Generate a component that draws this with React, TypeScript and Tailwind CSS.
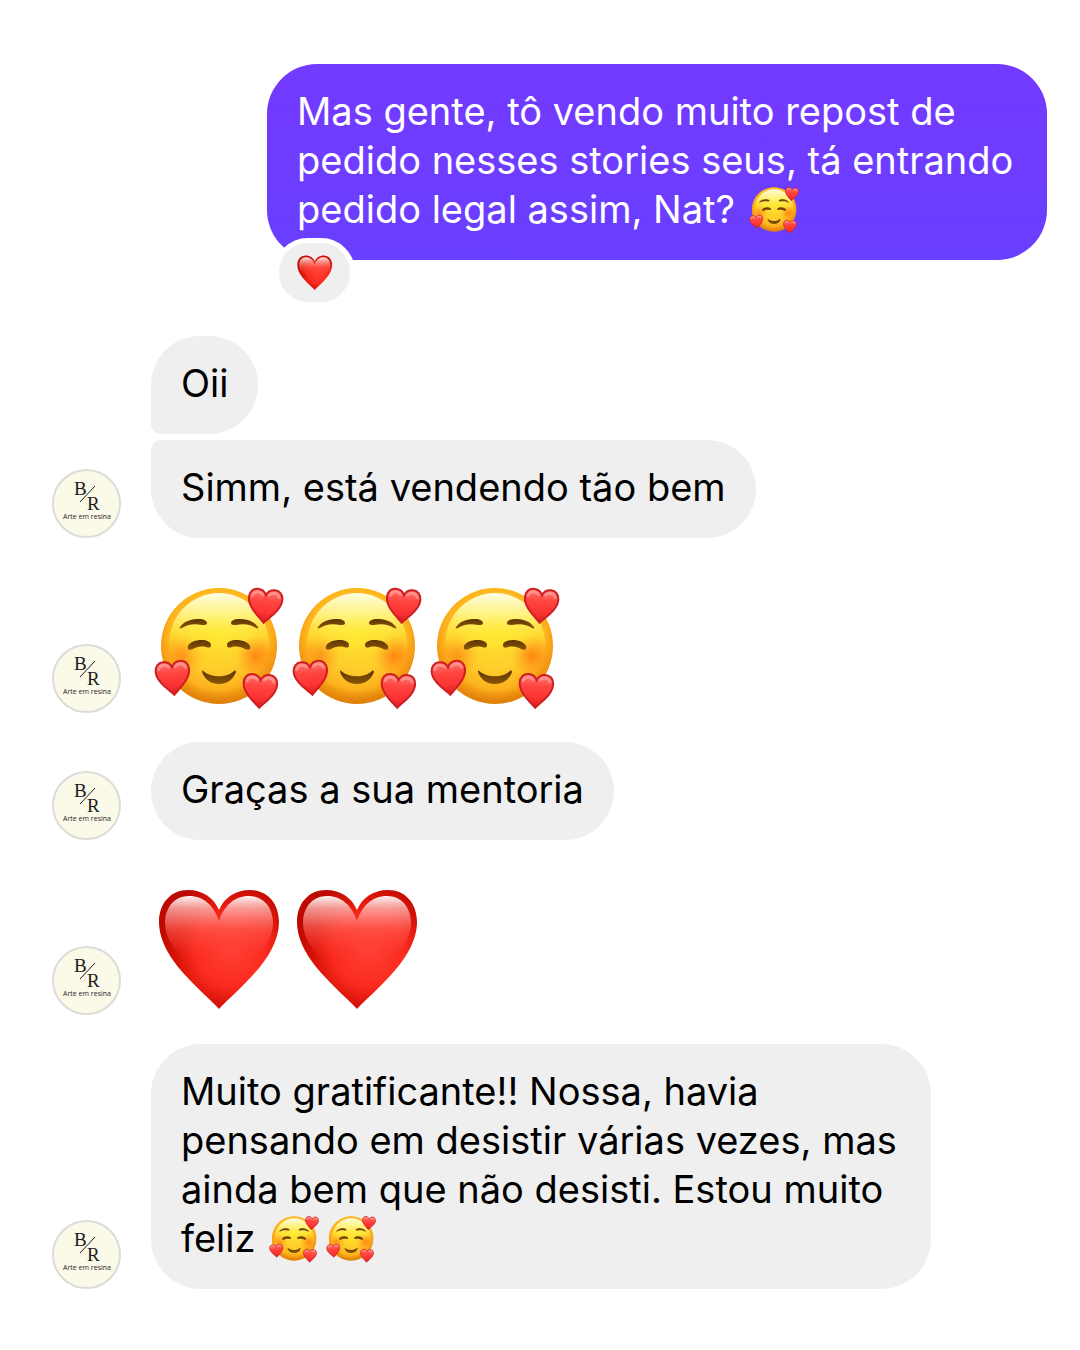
import { useId } from "react";
import type { ReactNode } from "react";
import clsx from "clsx";

const HEART =
  "M68 128C62 121 50 111 35 95C20 79 8 60 8 41C8 22 20 9 37 9C52 9 63 17 68 29C73 17 84 9 99 9C116 9 128 22 128 41C128 60 116 79 101 95C86 111 74 121 68 128Z";
const HEART_SHINE =
  "M68 118C62 111 54 102 41 88C26 72 14 58 14 42C14 26 24 15 38 15C53 15 63 25 68 40C73 25 83 15 98 15C112 15 122 26 122 42C122 58 110 72 95 88C82 102 74 111 68 118Z";

function RedHeart({ className }: { className?: string }) {
  const id = useId();
  return (
    <svg viewBox="0 0 138 138" className={className} role="img" aria-label="❤️">
      <defs>
        <radialGradient
          id={`${id}base`}
          gradientUnits="userSpaceOnUse"
          cx="80"
          cy="70"
          r="72"
        >
          <stop offset="0" stopColor="#ff4034" />
          <stop offset="0.5" stopColor="#fb2a1e" />
          <stop offset="0.75" stopColor="#d91409" />
          <stop offset="1" stopColor="#bd0a02" />
        </radialGradient>
        <linearGradient id={`${id}shine`} x1="0" y1="0" x2="0" y2="1">
          <stop offset="0" stopColor="#fff" stopOpacity="0.95" />
          <stop offset="0.12" stopColor="#ffc4c0" stopOpacity="0.75" />
          <stop offset="0.32" stopColor="#ff5f55" stopOpacity="0.65" />
          <stop offset="0.62" stopColor="#ff3b30" stopOpacity="0" />
        </linearGradient>
      </defs>
      <path d={HEART} fill={`url(#${id}base)`} />
      <path d={HEART_SHINE} fill={`url(#${id}shine)`} />
    </svg>
  );
}

function LoveFace({ className }: { className?: string }) {
  const id = useId();
  const hearts = [
    "translate(114 29) rotate(5) scale(0.28) translate(-68 -68)",
    "translate(22 101) rotate(-5) scale(0.28) translate(-68 -68)",
    "translate(109 114) rotate(3) scale(0.28) translate(-68 -68)",
  ];
  return (
    <svg viewBox="0 0 138 138" className={className} role="img" aria-label="🥰">
      <defs>
        <linearGradient id={`${id}rim`} x1="0" y1="0" x2="0" y2="1">
          <stop offset="0" stopColor="#fcb80f" />
          <stop offset="0.5" stopColor="#f79a14" />
          <stop offset="1" stopColor="#e0820a" />
        </linearGradient>
        <radialGradient id={`${id}face`} cx="0.5" cy="0.43" r="0.55">
          <stop offset="0" stopColor="#ffe22a" />
          <stop offset="0.5" stopColor="#ffcd2c" />
          <stop offset="0.82" stopColor="#fdb21e" />
          <stop offset="1" stopColor="#f79c14" stopOpacity="0" />
        </radialGradient>
        <linearGradient id={`${id}gloss`} x1="0" y1="0" x2="0" y2="1">
          <stop offset="0" stopColor="#fffde4" />
          <stop offset="0.22" stopColor="#fff98c" stopOpacity="0.85" />
          <stop offset="0.4" stopColor="#fff23c" stopOpacity="0.55" />
          <stop offset="0.6" stopColor="#ffe93a" stopOpacity="0" />
        </linearGradient>
        <radialGradient id={`${id}blush`}>
          <stop offset="0" stopColor="#ff7a10" stopOpacity="0.8" />
          <stop offset="1" stopColor="#ff8c14" stopOpacity="0" />
        </radialGradient>
        <linearGradient id={`${id}heart`} x1="0" y1="0" x2="0" y2="1">
          <stop offset="0" stopColor="#ff7a75" />
          <stop offset="0.35" stopColor="#ff4540" />
          <stop offset="0.7" stopColor="#fb3433" />
          <stop offset="1" stopColor="#d81a20" />
        </linearGradient>
        <linearGradient id={`${id}line`} x1="0" y1="0" x2="0" y2="1">
          <stop offset="0" stopColor="#5e3403" />
          <stop offset="1" stopColor="#8a5706" />
        </linearGradient>
      </defs>
      <circle cx="68" cy="69" r="58" fill={`url(#${id}rim)`} />
      <circle cx="68" cy="69" r="57" fill={`url(#${id}face)`} />
      <ellipse cx="68" cy="67" rx="50" ry="51" fill={`url(#${id}gloss)`} />
      <circle
        cx="31"
        cy="79"
        r="20"
        fill={`url(#${id}blush)`}
        opacity="0.75"
      />
      <circle cx="105" cy="79" r="20" fill={`url(#${id}blush)`} />
      <g fill={`url(#${id}line)`}>
        <path d="M29 50C34 43 42 42 48 42C53 42 56 44 56 46C56 48 54 48 51 48C42 46 36 48 31 51C29 52 28 51 29 50Z" />
        <path d="M107 50C102 43 94 42 88 42C83 42 80 44 80 46C80 48 82 48 85 48C94 46 100 48 105 51C107 52 108 51 107 50Z" />
        <path d="M37 69C39 65 45 63 50 63C56 63 60 65 60 68C60 71 58 71 55 70C50 69 45 70 42 72C38 74 36 72 37 69Z" />
        <path d="M99 69C97 65 91 63 86 63C80 63 76 65 76 68C76 71 78 71 81 70C86 69 91 70 94 72C98 74 100 72 99 69Z" />
        <path d="M52 94C60 101 76 101 83 94C84 93 85 94 85 95C82 103 76 107 68 107C60 107 54 103 51 95C51 94 51 93 52 94Z" />
      </g>
      {hearts.map((transform) => (
        <g key={transform} transform={transform}>
          <path
            d={HEART}
            fill={`url(#${id}heart)`}
            stroke="#cf1e20"
            strokeWidth="7"
          />
          <path
            d="M20 34C22 26 30 20 39 20C46 20 52 23 56 28M80 28C84 23 90 20 98 20C106 20 113 26 116 34"
            fill="none"
            stroke="#ffb5b0"
            strokeWidth="10"
            strokeLinecap="round"
            opacity="0.55"
          />
        </g>
      ))}
    </svg>
  );
}

function InlineFace() {
  return (
    <LoveFace className="inline-block align-middle size-[53px] -mt-[11px] -mb-[5px] mx-[2px]" />
  );
}

function Avatar() {
  return (
    <div className="size-[69px] shrink-0 rounded-full border-2 border-[#dcdcd8] bg-[#fbf9e8] overflow-hidden">
      <svg
        viewBox="2 2 65 65"
        className="size-full"
        role="img"
        aria-label="B/R Arte em resina"
      >
        <g fill="#1c1c1c" fontFamily="'Liberation Serif', serif" fontSize="19">
          <text x="22" y="26">
            B
          </text>
          <text x="35" y="41">
            R
          </text>
        </g>
        <path d="M28 33L43 17" stroke="#1c1c1c" strokeWidth="1" />
        <text
          x="35"
          y="50"
          textAnchor="middle"
          fontFamily="'Open Sans', sans-serif"
          fontSize="7"
          fill="#1c1c1c"
        >
          Arte em resina
        </text>
      </svg>
    </div>
  );
}

interface BubbleProps {
  children: ReactNode;
  className?: string;
}

function Bubble({ children, className }: BubbleProps) {
  return (
    <div
      className={clsx(
        "max-w-[780px] px-[30px] pt-[23px] pb-[26px] text-[38px] leading-[49px]",
        className
      )}
    >
      {children}
    </div>
  );
}

function Received({ children }: { children: ReactNode }) {
  return (
    <div className="flex items-end gap-[30px]">
      <Avatar />
      {children}
    </div>
  );
}

export default function App() {
  return (
    <main className="bg-white min-h-screen pl-[52px] pr-[33px] pt-16 pb-[60px] font-['Inter',sans-serif] text-black">
      <div className="flex justify-end">
        <div className="relative">
          <Bubble className="rounded-[50px] bg-linear-to-b from-[#733aff] to-[#693fff] text-white">
            Mas gente, tô vendo muito repost de pedido nesses stories seus, tá
            entrando pedido legal assim, Nat? <InlineFace />
          </Bubble>
          <button
            type="button"
            className="absolute left-[7px] -bottom-[47px] flex h-[69px] w-[81px] items-center justify-center rounded-[34px] border-5 border-white bg-[#efefef]"
          >
            <RedHeart className="size-10" />
          </button>
        </div>
      </div>

      <div className="mt-[76px] flex flex-col gap-[6px]">
        <div className="flex pl-[99px]">
          <Bubble className="rounded-[50px] rounded-bl-[10px] bg-[#efefef]">
            Oii
          </Bubble>
        </div>
        <Received>
          <Bubble className="rounded-[50px] rounded-tl-[10px] bg-[#efefef]">
            Simm, está vendendo tão bem
          </Bubble>
        </Received>
      </div>

      <div className="mt-[29px] flex flex-col gap-[29px]">
        <Received>
          <div className="flex h-[146px] pt-[10px]">
            <LoveFace className="size-[138px]" />
            <LoveFace className="size-[138px]" />
            <LoveFace className="size-[138px]" />
          </div>
        </Received>
        <Received>
          <Bubble className="rounded-[50px] bg-[#efefef]">
            Graças a sua mentoria
          </Bubble>
        </Received>
        <Received>
          <div className="flex h-[146px] pt-3">
            <RedHeart className="size-[138px]" />
            <RedHeart className="size-[138px]" />
          </div>
        </Received>
        <Received>
          <Bubble className="rounded-[50px] bg-[#efefef]">
            Muito gratificante!! Nossa, havia pensando em desistir várias vezes,
            mas ainda bem que não desisti. Estou muito feliz <InlineFace />
            <InlineFace />
          </Bubble>
        </Received>
      </div>
    </main>
  );
}
